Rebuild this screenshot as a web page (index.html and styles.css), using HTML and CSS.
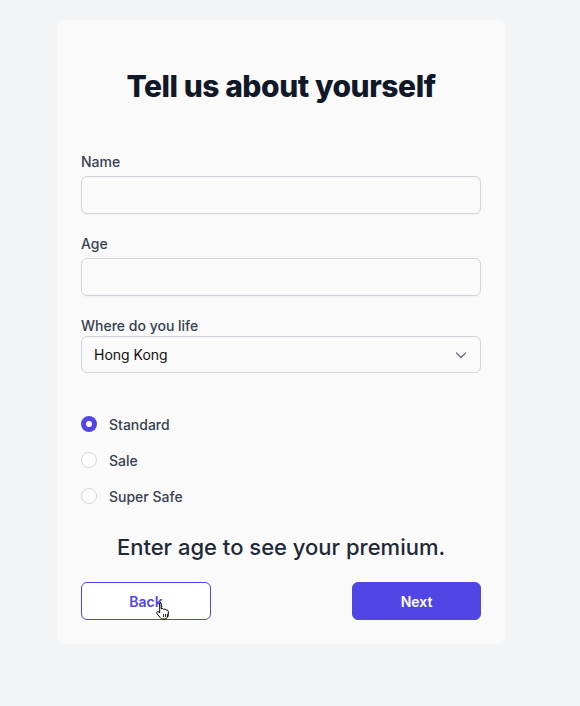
FILE: index.html
```html
<!DOCTYPE html>
<html>
<head>
<meta charset="utf-8">
<link rel="stylesheet" href="styles.css">
</head>
<body>
<main class="page">
  <form class="card">
    <h1 class="title">Tell us about yourself</h1>
    <div class="field">
      <label class="label">Name</label>
      <input class="input" type="text">
    </div>
    <div class="field">
      <label class="label">Age</label>
      <input class="input" type="text">
    </div>
    <div class="field field-tight">
      <label class="label">Where do you life</label>
      <div class="select">
        <span>Hong Kong</span>
        <svg class="chevron" width="20" height="20" viewBox="0 0 20 20" fill="none" stroke="#6b7280" stroke-width="1.25" stroke-linecap="round" stroke-linejoin="round"><path d="M5.5 8l4.5 4.5 4.5-4.5"/></svg>
      </div>
    </div>
    <div class="radios">
      <label class="radio-row"><span class="radio checked"></span><span>Standard</span></label>
      <label class="radio-row"><span class="radio"></span><span>Sale</span></label>
      <label class="radio-row"><span class="radio"></span><span>Super Safe</span></label>
    </div>
    <p class="premium">Enter age to see your premium.</p>
    <div class="actions">
      <button type="button" class="btn btn-outline">Back
        <svg class="cursor" width="17" height="19" viewBox="0 0 17 19"><path d="M5 1.5c.8 0 1.3.6 1.3 1.3v5.2c.3-.4.8-.6 1.3-.5.6.1 1 .5 1.1 1 .3-.3.8-.5 1.3-.4.6.1 1 .6 1.1 1.1.3-.2.7-.3 1.1-.2.7.2 1.1.8 1.1 1.5v3.2c0 2.4-1.8 4.3-4.2 4.3H8.2c-1.3 0-2.4-.6-3.2-1.6L2 12.6c-.5-.6-.4-1.4.2-1.8.5-.4 1.3-.3 1.7.2l.8 1V2.8c0-.7.5-1.3 1.3-1.3z" fill="#fff" stroke="#000" stroke-width="1"/><path d="M8.6 13v3M10.6 13v3M12.6 13v3" stroke="#000" stroke-width=".9"/></svg>
      </button>
      <button type="button" class="btn btn-primary">Next</button>
    </div>
  </form>
</main>
</body>
</html>
```
FILE: styles.css
```css
* { box-sizing: border-box; }
html, body { margin: 0; padding: 0; }
body {
  background: #f3f4f6;
  font-family: Inter, "Noto Sans", sans-serif;
  color: #374151;
  width: 580px;
  height: 706px;
}
.page {
  padding: 20px 0 0 57px;
}
.card {
  width: 448px;
  background: #fafafa;
  border-radius: 8px;
  padding: 48px 24px 24px;
  display: flex;
  flex-direction: column;
}
.title {
  margin: 0 0 48px;
  font-size: 30px;
  line-height: 36px;
  font-weight: 800;
  color: #111827;
  text-align: center;
  letter-spacing: -0.45px;
}
.field {
  display: flex;
  flex-direction: column;
  gap: 4px;
  margin-bottom: 20px;
}
.field-tight { gap: 0; margin-bottom: 0; }
.label {
  font-size: 14px;
  line-height: 20px;
  font-weight: 500;
  color: #374151;
}
.input {
  height: 38px;
  border: 1px solid #d1d5db;
  border-radius: 6px;
  background: #fafafa;
  box-shadow: 0 1px 2px rgba(0,0,0,0.04);
  outline: none;
}
.select {
  height: 37px;
  border: 1px solid #d1d5db;
  border-radius: 6px;
  background: #fafafa;
  padding: 0 9px 0 12px;
  display: flex;
  align-items: center;
  justify-content: space-between;
  font-size: 14px;
  color: #111;
}
.radios {
  margin-top: 41px;
  display: flex;
  flex-direction: column;
  gap: 16px;
}
.radio-row {
  display: flex;
  align-items: center;
  gap: 12px;
  height: 20px;
  font-size: 14px;
  font-weight: 500;
  color: #374151;
}
.radio {
  width: 16px;
  height: 16px;
  border-radius: 50%;
  border: 1px solid #d1d5db;
  background: #fff;
}
.radio.checked {
  border: 5px solid #4f46e5;
  background: #fff;
}
.premium {
  margin: 25px 0 0;
  font-size: 22px;
  line-height: 32px;
  color: #1f2937;
  text-align: center;
  font-weight: 500;
}
.actions {
  margin-top: 19px;
  display: flex;
  justify-content: space-between;
}
.btn {
  width: 130px;
  height: 38px;
  border-radius: 6px;
  font-family: Inter, "Noto Sans", sans-serif;
  font-size: 14px;
  font-weight: 600;
  cursor: pointer;
}
.btn-outline {
  position: relative;
  background: #fff;
  border: 1px solid #4f46e5;
  color: #4f46e5;
}
.btn-primary {
  background: #4f46e5;
  border: 1px solid #4f46e5;
  color: #fff;
  width: 129px;
}
.cursor {
  position: absolute;
  left: 73px;
  top: 18px;
}
```
